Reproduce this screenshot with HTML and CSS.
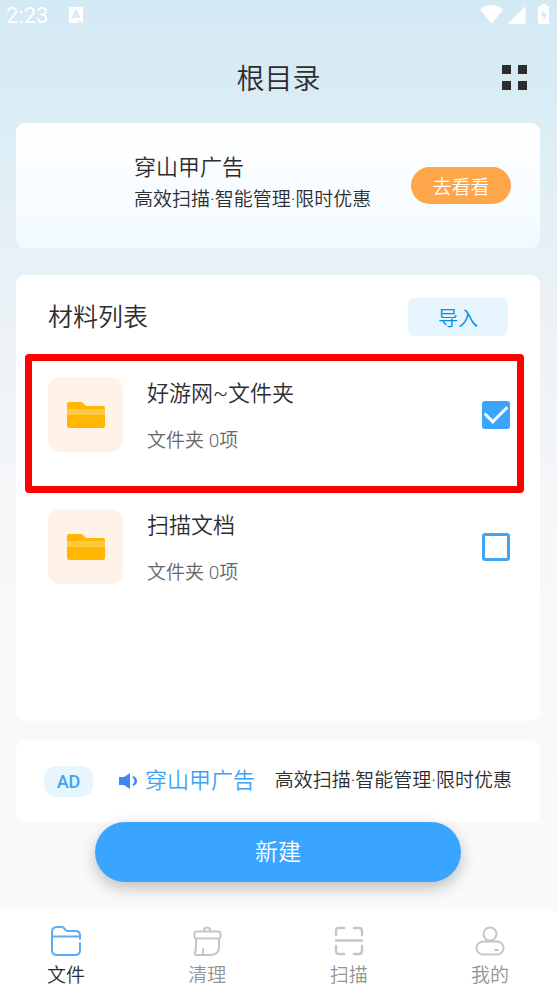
FILE: index.html
```html
<!DOCTYPE html>
<html lang="zh-CN">
<head>
  <meta charset="utf-8">
  <meta name="viewport" content="width=device-width, initial-scale=1">
  <title>根目录</title>
  <link rel="stylesheet" href="styles.css">
</head>
<body>
  <div class="app">
    <div class="status">
      <span class="status-time">2:23</span>
      <svg class="status-app" width="14" height="16" viewBox="0 0 14 16" aria-hidden="true">
        <rect width="14" height="16" rx="1" fill="#fff"/>
        <path d="M3.5 11.5 7 4l3.5 7.5M4.8 9.5h4.400" fill="none" stroke="#d5e9f3" stroke-width="2"/>
        <path d="M8 14.500h5" stroke="#d5e9f3" stroke-width="1"/>
      </svg>
      <svg class="status-signals" width="72" height="21" viewBox="0 0 72 21" fill="#fff" aria-hidden="true">
        <path d="M1 5.500Q12.500-3.500 24 5.500L12.500 20Z"/>
        <path d="M46.500 2v18H28.500Z"/>
        <path d="M59 2h3V0h5v2h3v18H59Z"/>
        <path d="M65.500 5 62 12h2.500v5l3.500-7h-2.500Z" fill="#d5e9f3"/>
      </svg>
    </div>

    <header class="header">
      <h1 class="title">根目录</h1>
      <button class="grid-button" type="button" aria-label="视图">
        <svg width="25" height="25" viewBox="0 0 25 25" fill="#2d2d2f">
          <path d="M0 0h9v9H0zM16 0h9v9h-9zM0 16h9v9H0zM16 16h9v9h-9z"/>
        </svg>
      </button>
    </header>

    <main class="content">
      <section class="card promo">
        <div class="promo-text">
          <h2 class="promo-title">穿山甲广告</h2>
          <p class="ad-copy">高效扫描·智能管理·限时优惠</p>
        </div>
        <button class="promo-button" type="button">去看看</button>
      </section>

      <section class="card files">
        <div class="files-head">
          <h2 class="files-title">材料列表</h2>
          <button class="import-button" type="button">导入</button>
        </div>
        <ul class="file-list">
          <li class="file file-marked">
            <span class="thumb">
              <svg width="38" height="26" viewBox="0 0 38 26" aria-hidden="true">
                <path d="M2 0h12q1 0 2 1l3 3h17q2 0 2 2v18q0 2-2 2H2q-2 0-2-2V2q0-2 2-2Z" fill="#ffb703"/>
                <path d="M0 7h38v6H0z" fill="#ffca3e"/>
              </svg>
            </span>
            <label class="file-text" for="file-1">
              <span class="file-name">好游网~文件夹</span>
              <span class="file-meta">文件夹 0项</span>
            </label>
            <input class="check" id="file-1" type="checkbox" checked>
          </li>
          <li class="file">
            <span class="thumb">
              <svg width="38" height="26" viewBox="0 0 38 26" aria-hidden="true">
                <path d="M2 0h12q1 0 2 1l3 3h17q2 0 2 2v18q0 2-2 2H2q-2 0-2-2V2q0-2 2-2Z" fill="#ffb703"/>
                <path d="M0 7h38v6H0z" fill="#ffca3e"/>
              </svg>
            </span>
            <label class="file-text" for="file-2">
              <span class="file-name">扫描文档</span>
              <span class="file-meta">文件夹 0项</span>
            </label>
            <input class="check" id="file-2" type="checkbox">
          </li>
        </ul>
      </section>

      <section class="card notice">
        <span class="badge">AD</span>
        <svg class="speaker" width="19" height="18" viewBox="0 0 19 18" aria-hidden="true">
          <path d="M0 5h5l6-4v16l-6-4H0Z" fill="#4285f4"/>
          <path d="M14 4q4 1.500 4 5t-4 5l-.5-1.500Q15.500 11 15.500 9t-2-3.500Z" fill="#4285f4"/>
        </svg>
        <span class="notice-title">穿山甲广告</span>
        <p class="ad-copy">高效扫描·智能管理·限时优惠</p>
      </section>

      <button class="create-button" type="button">新建</button>
    </main>

    <nav class="tabs">
      <a class="tab tab-active" href="#files">
        <svg width="30" height="30" viewBox="0 0 30 30" aria-hidden="true">
          <path d="M29 13V9.500Q29 5 24.500 5H16.500Q15 5 14.300 3.800L13.800 3Q12.500 1 10.500 1H6Q1 1 1 6V24Q1 29 6 29H24Q29 29 29 24V17M1 10.500H29"/>
        </svg>
        <span>文件</span>
      </a>
      <a class="tab" href="#clean">
        <svg width="30" height="30" viewBox="0 0 30 30" aria-hidden="true">
          <path d="M12 5.500V4.500a3 3 0 0 1 6 0v1M4.500 5.500h22q2 0 2 2v3q0 2-2 2h-22q-2 0-2-2v-3q0-2 2-2ZM4 13v6q0 5-1 8-.5 2 1.500 2h15q7.500-1 7.500-8v-8M11 29v-6"/>
        </svg>
        <span>清理</span>
      </a>
      <a class="tab" href="#scan">
        <svg width="30" height="30" viewBox="0 0 30 30" aria-hidden="true">
          <path d="M2 9V5q0-3 3-3h5M20 2h5q3 0 3 3v4M28 20v5q0 3-3 3h-5M10 28H5q-3 0-3-3v-5M2 14.500h26" stroke-width="2.400"/>
        </svg>
        <span>扫描</span>
      </a>
      <a class="tab" href="#me">
        <svg width="30" height="30" viewBox="0 0 30 30" aria-hidden="true">
          <path d="M21.500 8a6.500 6.500 0 1 1-13 0a6.500 6.500 0 0 1 13 0ZM8 15.500h14a6.500 6.500 0 0 1 0 13H8a6.500 6.500 0 0 1 0-13ZM20 24h3"/>
        </svg>
        <span>我的</span>
      </a>
    </nav>
  </div>
</body>
</html>
```
FILE: styles.css
```css
* {
  box-sizing: border-box;
}

body {
  margin: 0;
  color: #2d2d2f;
  font-family: Roboto, "Noto Sans CJK SC", sans-serif;
  font-size: 19px;
  font-weight: 350;
}

h1, h2, p, ul {
  margin: 0;
  padding: 0;
  font-weight: inherit;
}

button {
  padding: 0;
  border: 0;
  font: inherit;
  cursor: pointer;
}

svg {
  display: block;
  flex: none;
}

.app {
  display: flex;
  flex-direction: column;
  min-height: 100vh;
  background: linear-gradient(#d3e9f4 0%, #dbedf5 12%, #e8f1f6 27%, #f0f4f8 40%, #f6f7f8 52%, #f9f9f9 72%, #fafafa 100%);
}

.status {
  display: flex;
  align-items: center;
  height: 30px;
  padding: 0 6px;
  color: #fff;
}

.status-time {
  font-size: 22px;
  font-weight: 400;
}

.status-app {
  margin-left: 21px;
}

.status-signals {
  margin: 0 0 2px auto;
}

.header {
  display: grid;
  grid-template-columns: 25px 1fr 25px;
  align-items: center;
  height: 93px;
  padding: 2px 30px 0;
}

.title {
  grid-column: 2;
  padding-top: 4px;
  font-size: 28px;
  line-height: 40px;
  text-align: center;
}

.grid-button {
  background: none;
}

.content {
  display: flex;
  flex: 1;
  flex-direction: column;
  padding: 0 17px 29px 16px;
}

.card {
  border-radius: 9px;
  background: #fff;
}

.promo {
  display: flex;
  align-items: center;
  justify-content: space-between;
  height: 125px;
  padding: 0 29px 0 118px;
  background: linear-gradient(#fff, #f2faff);
}

.promo-text {
  padding-bottom: 4px;
}

.promo-title {
  font-size: 22px;
  line-height: 32px;
}

.ad-copy {
  line-height: 32px;
  white-space: nowrap;
}

.promo-button {
  width: 100px;
  height: 37px;
  border-radius: 19px;
  background: #ffa54a;
  color: #fff;
}

.files {
  flex: 1;
  margin: 27px 0 19px;
  padding: 23px 30px 0 32px;
}

.files-head {
  display: flex;
  align-items: center;
  justify-content: space-between;
  margin-bottom: 41px;
}

.files-title {
  padding-top: 2px;
  font-size: 25px;
  line-height: 36px;
}

.import-button {
  width: 100px;
  height: 38px;
  margin-right: 2px;
  border-radius: 6px;
  background: #e7f5ff;
  color: #098ee8;
  font-size: 20px;
}

.file-list {
  display: grid;
  gap: 57px;
  list-style: none;
}

.file {
  position: relative;
  display: flex;
  align-items: center;
  height: 75px;
}

.file-marked::after {
  content: "";
  position: absolute;
  inset: -23px -14px -41px -23px;
  border: 7px solid #f00;
  border-radius: 4px;
  pointer-events: none;
}

.thumb {
  display: grid;
  place-items: center;
  width: 75px;
  height: 75px;
  border-radius: 12px;
  background: #fff3e9;
}

.file-text {
  display: flex;
  flex: 1;
  flex-direction: column;
  gap: 17px;
  margin-left: 24px;
  padding-top: 3px;
}

.file-name {
  font-size: 22px;
  line-height: 32px;
}

.file-meta {
  color: #666;
  line-height: 28px;
}

.check {
  width: 28px;
  height: 28px;
  margin: 0;
  border: 3px solid #43a4f4;
  border-radius: 3px;
  appearance: none;
}

.check:checked {
  display: grid;
  place-items: center;
  border-color: #3aa5ff;
  background: #3aa5ff;
}

.check:checked::before {
  content: "";
  width: 19px;
  height: 10px;
  margin-bottom: 6px;
  border: solid #fff;
  border-width: 0 0 3px 3px;
  transform: rotate(-45deg);
}

.notice {
  display: flex;
  align-items: center;
  height: 82px;
  padding: 0 28px;
}

.badge {
  width: 49px;
  border-radius: 12px;
  background: #e7f5ff;
  color: #3fa2f5;
  font-size: 18px;
  font-weight: 500;
  line-height: 31px;
  text-align: center;
}

.speaker {
  margin: 0 7px 0 26px;
}

.notice-title {
  color: #3fa2f5;
  font-size: 22px;
  line-height: 32px;
}

.notice .ad-copy {
  margin-left: auto;
}

.create-button {
  align-self: center;
  width: 70%;
  height: 60px;
  padding-bottom: 4px;
  border-radius: 30px;
  background: #3aa5ff;
  box-shadow: 0 6px 16px rgb(0 0 0 / 24%);
  color: #fff;
  font-size: 23px;
}

.tabs {
  display: flex;
  justify-content: space-between;
  height: 79px;
  padding: 15px 48px 0 47px;
  background: #fff;
}

.tab {
  display: flex;
  flex-direction: column;
  align-items: center;
  gap: 6px;
  color: #949494;
  line-height: 28px;
  text-decoration: none;
}

.tab svg {
  fill: none;
  stroke: #c6c6c6;
  stroke-linecap: round;
  stroke-linejoin: round;
  stroke-width: 2;
}

.tab-active {
  color: #2d2d2f;
}

.tab-active svg {
  stroke: #5babf5;
}
```
